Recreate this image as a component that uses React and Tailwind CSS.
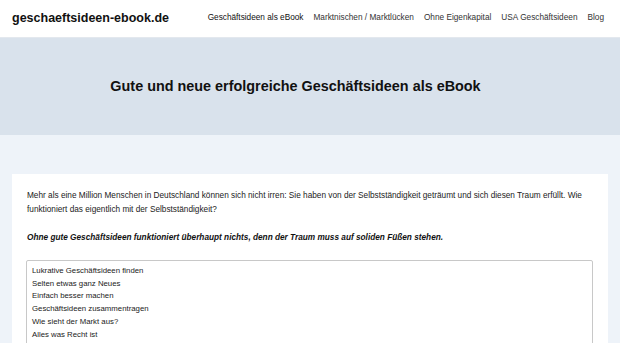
const NAV = [
  { label: "Geschäftsideen als eBook", active: true },
  { label: "Marktnischen / Marktlücken" },
  { label: "Ohne Eigenkapital" },
  { label: "USA Geschäftsideen" },
  { label: "Blog" },
];

const TOPICS = [
  "Lukrative Geschäftsideen finden",
  "Selten etwas ganz Neues",
  "Einfach besser machen",
  "Geschäftsideen zusammentragen",
  "Wie sieht der Markt aus?",
  "Alles was Recht ist",
];

const App = () => {
  return (
    <div className="h-[343px] overflow-hidden bg-[#eef3f9] font-['Liberation_Sans',Arial,sans-serif] text-[#222]">
      {/* Header */}
      <header className="h-[38px] bg-white border-b border-[#e3e8ee] pl-3 pr-4 flex items-center justify-between">
        <a className="text-[12.5px] font-bold text-[#111]">
          geschaeftsideen-ebook.de
        </a>
        <nav className="flex items-center gap-[10px]">
          {NAV.map((item) => (
            <a
              key={item.label}
              className={`text-[8.25px] ${
                item.active ? "text-[#111] font-medium" : "text-[#333]"
              }`}
            >
              {item.label}
            </a>
          ))}
        </nav>
      </header>

      {/* Hero */}
      <section className="h-[97px] bg-[#d9e2ec] pr-[29px] flex items-center justify-center">
        <h1 className="text-[14.4px] font-bold text-[#111]">
          Gute und neue erfolgreiche Geschäftsideen als eBook
        </h1>
      </section>

      {/* Content */}
      <main className="px-3 pt-[39px]">
        <div className="bg-white px-[15px] pt-[15px] pb-4">
          <p className="text-[8.25px] leading-[14px]">
            Mehr als eine Million Menschen in Deutschland können sich nicht irren: Sie haben von der
            Selbstständigkeit geträumt und sich diesen Traum erfüllt. Wie funktioniert das eigentlich mit
            der Selbstständigkeit?
          </p>
          <p className="mt-[14px] text-[8.25px] leading-[14px] font-bold italic text-[#111]">
            Ohne gute Geschäftsideen funktioniert überhaupt nichts, denn der Traum muss auf soliden Füßen stehen.
          </p>
          <div className="mt-[15px] -ml-px border border-[#c8c8c8] rounded-[2px] px-[5px] pt-[4px] pb-2">
            {TOPICS.map((t) => (
              <div key={t} className="text-[7.8px] leading-[12.7px] text-[#222]">
                {t}
              </div>
            ))}
          </div>
        </div>
      </main>
    </div>
  );
};

export default App;
